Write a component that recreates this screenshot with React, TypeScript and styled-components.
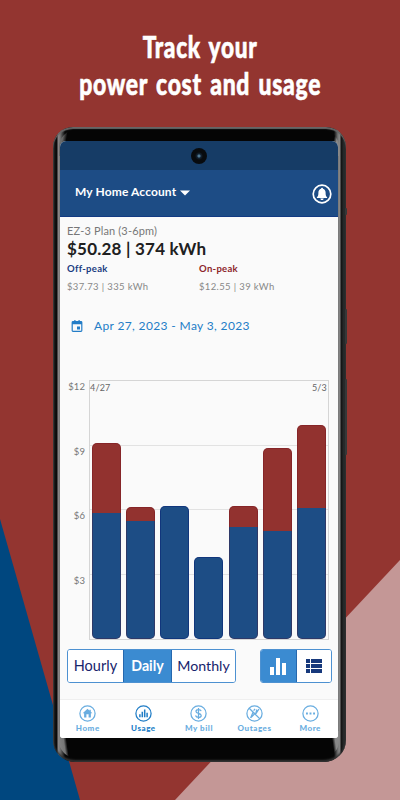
import React from 'react';
import styled, { createGlobalStyle } from 'styled-components';

const GlobalStyle = createGlobalStyle`
  * { box-sizing: border-box; }
  body { margin: 0; overflow: hidden; font-family: Lato, "Open Sans", sans-serif; }
`;

const Poster = styled.main`
  width: 400px;
  height: 800px;
  padding-top: 28px;
  display: flex;
  flex-direction: column;
  align-items: center;
  overflow: hidden;
  background: #933530;
  position: relative;
`;

const Backdrop = styled.svg`
  position: absolute;
  inset: 0;
`;

const Title = styled.h1`
  position: relative;
  margin: 0;
  height: 99px;
  display: flex;
  flex-direction: column;
  align-items: center;
  color: #fff;
  font-size: 30px;
  line-height: 37px;
  font-weight: 900;
  -webkit-text-stroke: 0.6px #fff;
`;

const TitleLine = styled.span<{ $scale: number }>`
  white-space: nowrap;
  letter-spacing: 0.9px;
  word-spacing: 3px;
  transform: scaleX(${(p) => p.$scale});
`;

const Phone = styled.div`
  position: relative;
  left: -0.5px;
  width: 293px;
  height: 635px;
  flex: none;
  padding: 14px 8px 24px 7px;
  border-radius: 20px 20px 22px 22px;
  background: linear-gradient(90deg, #3a3a3a 0, #111 2px, #080808 4px, #8c8889 5px, #777 7px, #060606 12px, #060606 281px, #777 285px, #888 287px, #111 288px, #292d2e 291px, #222 293px);
  box-shadow: inset 0 2px 1px #666, inset 0 -2px 2px #333;
`;

const Bezel = styled.div<{ $bottom?: boolean }>`
  position: absolute;
  left: 6px;
  right: 7px;
  ${(p) => (p.$bottom ? 'bottom: 4px; height: 27px; border-radius: 0 0 17px 17px;' : 'top: 3px; height: 26px; border-radius: 17px 17px 0 0;')}
  background: ${(p) => (p.$bottom
    ? 'linear-gradient(82deg, #888 0, #777 7px, #050505 10px, #050505 calc(100% - 8px), #888 calc(100% - 5px))'
    : 'linear-gradient(100deg, #777 0, #666 5px, #050505 9px, #050505 calc(100% - 8px), #888 calc(100% - 5px))')};
`;

const SideKey = styled.i<{ $top: number; $height: number }>`
  position: absolute;
  right: -1px;
  top: ${(p) => p.$top}px;
  width: 2px;
  height: ${(p) => p.$height}px;
  background: #343838;
  border-radius: 1px;
`;

const Screen = styled.div`
  position: relative;
  height: 597px;
  display: flex;
  flex-direction: column;
  background: #fafafa;
  border-radius: 6px 6px 3px 3px;
  overflow: hidden;
`;

const StatusBar = styled.div`
  height: 29px;
  flex: none;
  display: flex;
  justify-content: center;
  align-items: center;
  background: #163c66;
`;

const Camera = styled.div`
  width: 16px;
  height: 16px;
  border-radius: 50%;
  background: radial-gradient(circle at 50% 50%, #527a94 0 1px, #142536 2px, #080b0e 4px);
`;

const Header = styled.header`
  height: 47px;
  flex: none;
  display: flex;
  align-items: center;
  justify-content: space-between;
  padding: 1px 6px 0 15px;
  color: #fff;
  background: #1d4c85;
  border-bottom: 1px solid #123a83;
`;

const Account = styled.div`
  display: flex;
  align-items: center;
  gap: 4px;
  height: 18px;
  margin-top: -2px;
`;

const Text = styled.span<{ $size: number; $color?: string; $weight?: number; $space?: number }>`
  display: block;
  white-space: nowrap;
  font-size: ${(p) => p.$size}px;
  line-height: 1.2;
  color: ${(p) => p.$color ?? 'inherit'};
  font-weight: ${(p) => p.$weight ?? 400};
  letter-spacing: ${(p) => p.$space ?? 0}px;
`;

const Summary = styled.section`
  height: 95px;
  flex: none;
  padding: 7px 7px 0;
`;

const Amount = styled.div`
  height: 23px;
  margin-top: 2px;
`;

const Peaks = styled.div`
  display: grid;
  grid-template-columns: 132px 1fr;
  row-gap: 6px;
  margin-top: 1px;
`;

const DateRow = styled.div`
  height: 28px;
  flex: none;
  display: flex;
  align-items: center;
  gap: 11px;
  padding-left: 11px;
  color: #237dc7;
`;

const Chart = styled.section`
  height: 260px;
  flex: none;
  display: flex;
  margin-top: 40px;
`;

const Scale = styled.div`
  width: 29px;
  padding: 1px 4px 0 0;
  display: grid;
  grid-template-rows: repeat(4, 64.7px);
  justify-items: end;
`;

const Plot = styled.div`
  position: relative;
  width: 240px;
  height: 260px;
  display: flex;
  align-items: flex-end;
  justify-content: space-between;
  padding: 0 2px;
  border: 1px solid #d5d5d5;
  background: repeating-linear-gradient(to bottom, transparent 0 63.7px, #e2e2e2 63.7px 64.7px);
`;

const Bar = styled.div<{ $height: number; $peak: number }>`
  width: 29px;
  height: ${(p) => p.$height}px;
  border-radius: 5px;
  background: linear-gradient(to bottom, #92322f ${(p) => p.$peak}px, #1d4d85 ${(p) => p.$peak}px);
  box-shadow: inset 0 0 0 1px ${(p) => (p.$peak ? 'rgba(100,0,20,.25)' : 'rgba(0,20,110,.4)')};
`;

const DayMark = styled.div<{ $end?: boolean }>`
  position: absolute;
  top: 2px;
  ${(p) => (p.$end ? 'right: 1px;' : 'left: 0;')}
`;

const Controls = styled.div`
  height: 34px;
  flex: none;
  display: flex;
  justify-content: space-between;
  margin: 9px 6px 16px 7px;
`;

const Segments = styled.div`
  display: flex;
  border: 1px solid #4d91d1;
  border-radius: 3px;
  overflow: hidden;
  background: #fff;
`;

const Segment = styled.button<{ $width: number; $active?: boolean }>`
  width: ${(p) => p.$width}px;
  border: 0;
  padding: 0;
  display: flex;
  align-items: center;
  justify-content: center;
  font-family: inherit;
  color: ${(p) => (p.$active ? '#fff' : '#17246c')};
  background: ${(p) => (p.$active ? '#3b8bd1' : '#fff')};
  & + & { border-left: 1px solid #2668ae; }
`;

const Nav = styled.nav`
  height: 39px;
  flex: none;
  display: grid;
  grid-template-columns: repeat(5, 1fr);
  background: #fff;
  border-top: 1px solid #efefef;
`;

const NavItem = styled.a<{ $active?: boolean }>`
  display: flex;
  flex-direction: column;
  align-items: center;
  padding-top: 5px;
  gap: 2px;
  color: ${(p) => (p.$active ? '#207dc6' : '#69ade0')};
`;

type Glyph = 'home' | 'usage' | 'bill' | 'outage' | 'more';

function NavIcon({ kind }: { kind: Glyph }) {
  return (
    <svg width="17" height="17" viewBox="0 0 17 17" fill="none" stroke="currentColor" strokeWidth="1.25">
      <circle cx="8.5" cy="8.5" r="7.6" />
      {kind === 'home' && <path d="M8.5 3.7 3.7 8.3h1.4v4.2h2.3V9.2h2.2v3.3h2.3V8.3h1.4l-1.5-1.5V4.7h-1.3v1z" fill="currentColor" stroke="none" />}
      {kind === 'usage' && <path d="M4.9 12.3V9.2M7.3 12.3V6.8M9.7 12.3V4.5M12.1 12.3V7.8" strokeWidth="1.5" />}
      {kind === 'bill' && <path d="M11.2 6.1C10.8 5 9.9 4.6 8.5 4.6c-1.5 0-2.5.7-2.5 1.8 0 2.6 5.2 1.2 5.2 4 0 1.3-1.1 2-2.7 2-1.7 0-2.6-.7-3-1.9M8.5 3v11" />}
      {kind === 'outage' && <path d="m3.2 3.2 10.7 10.7M4.6 13 7.1 7l2.4 2.2L13 4M7.6 5.6l1.5-1.8M9.7 8.8l1.1-4.3M5.2 12.2l3-3" />}
      {kind === 'more' && <path d="M4 8.5h1.9M7.55 8.5h1.9M11.1 8.5H13" strokeWidth="1.9" />}
    </svg>
  );
}

const bars = [
  { height: 196, peak: 69.5 },
  { height: 132, peak: 14 },
  { height: 133, peak: 0 },
  { height: 82, peak: 0 },
  { height: 133, peak: 21 },
  { height: 191, peak: 83.5 },
  { height: 214, peak: 82.5 },
];

const tabs: { label: string; kind: Glyph; active?: boolean }[] = [
  { label: 'Home', kind: 'home' },
  { label: 'Usage', kind: 'usage', active: true },
  { label: 'My bill', kind: 'bill' },
  { label: 'Outages', kind: 'outage' },
  { label: 'More', kind: 'more' },
];

export default function App() {
  return (
    <Poster>
      <GlobalStyle />
      <Backdrop width="400" height="800" viewBox="0 0 400 800">
        <path d="M0 519 80 800H0z" fill="#00477f" />
        <path d="M400 560V800H175z" fill="#c49796" />
      </Backdrop>
      <Title>
        <TitleLine $scale={0.755}>Track your</TitleLine>
        <TitleLine $scale={0.765}>power cost and usage</TitleLine>
      </Title>
      <Phone>
        <Bezel />
        <Bezel $bottom />
        <SideKey $top={81} $height={7} />
        <SideKey $top={182} $height={35} />
        <SideKey $top={252} $height={76} />
        <Screen>
          <StatusBar><Camera /></StatusBar>
          <Header>
            <Account>
              <Text $size={12} $weight={700} $space={0.12}>My Home Account</Text>
              <svg width="10" height="6" viewBox="0 0 10 6"><path d="M0 .5h10L5 5.5z" fill="#fff" /></svg>
            </Account>
            <svg width="20" height="20" viewBox="0 0 20 20">
              <circle cx="10" cy="10" r="8.8" fill="none" stroke="#fff" strokeWidth="1.7" />
              <path d="M10 3.8c.6 0 1 .4 1 .9 1.7.5 2.6 1.9 2.6 3.9 0 2.7.3 3.6 1.5 4.7v.7H4.9v-.7c1.2-1.1 1.5-2 1.5-4.7 0-2 .9-3.4 2.6-3.9 0-.5.4-.9 1-.9zM8.4 14.5h3.2c-.1 1-.7 1.5-1.6 1.5s-1.5-.5-1.6-1.5z" fill="#fff" />
            </svg>
          </Header>
          <Summary>
            <Text $size={11} $color="#777" $space={0.15}>EZ-3 Plan (3-6pm)</Text>
            <Amount><Text $size={17} $color="#202020" $weight={700} $space={0.22}>$50.28 | 374 kWh</Text></Amount>
            <Peaks>
              <Text $size={9.5} $color="#193b80" $weight={700} $space={0.3}>Off-peak</Text>
              <Text $size={9.5} $color="#8d2529" $weight={700} $space={0.3}>On-peak</Text>
              <Text $size={9.5} $color="#888" $space={0.36}>$37.73 | 335 kWh</Text>
              <Text $size={9.5} $color="#888" $space={0.36}>$12.55 | 39 kWh</Text>
            </Peaks>
          </Summary>
          <DateRow>
            <svg width="12" height="13" viewBox="0 0 12 13" fill="currentColor">
              <path fillRule="evenodd" d="M2 1h1.3V0h1.2v1h3V0h1.2v1H10a1.4 1.4 0 0 1 1.4 1.4v8.2A1.4 1.4 0 0 1 10 12H2a1.4 1.4 0 0 1-1.4-1.4V2.4A1.4 1.4 0 0 1 2 1zm-.2 3.2v6.6h8.4V4.2zM6 6.4h3v3H6z" />
            </svg>
            <Text $size={12} $space={0.36}>Apr 27, 2023 - May 3, 2023</Text>
          </DateRow>
          <Chart>
            <Scale>
              {['$12', '$9', '$6', '$3'].map((value) => <Text key={value} $size={9.5} $color="#777" $space={0.1}>{value}</Text>)}
            </Scale>
            <Plot>
              {bars.map((bar, i) => <Bar key={i} $height={bar.height} $peak={bar.peak} />)}
              <DayMark><Text $size={9} $color="#666" $space={0.2}>4/27</Text></DayMark>
              <DayMark $end><Text $size={9} $color="#666" $space={0.2}>5/3</Text></DayMark>
            </Plot>
          </Chart>
          <Controls>
            <Segments>
              <Segment $width={55}><Text $size={14.5} $space={0.05}>Hourly</Text></Segment>
              <Segment $width={48} $active><Text $size={14.2} $weight={700}>Daily</Text></Segment>
              <Segment $width={64}><Text $size={14.2}>Monthly</Text></Segment>
            </Segments>
            <Segments>
              <Segment $width={35} $active aria-label="Chart view">
                <svg width="17" height="17" viewBox="0 0 17 17" fill="#fff"><path d="M0 9h4v8H0zM6 0h4v17H6zM12 5h4v12h-4z" /></svg>
              </Segment>
              <Segment $width={35} aria-label="List view">
                <svg width="16" height="14" viewBox="0 0 16 14" fill="#17397c"><path d="M0 0h4v4H0zM5 0h11v4H5zM0 5h4v4H0zM5 5h11v4H5zM0 10h4v4H0zM5 10h11v4H5z" /></svg>
              </Segment>
            </Segments>
          </Controls>
          <Nav>
            {tabs.map((tab) => (
              <NavItem key={tab.label} $active={tab.active}>
                <NavIcon kind={tab.kind} />
                <Text $size={8} $weight={900} $space={0.55}>{tab.label}</Text>
              </NavItem>
            ))}
          </Nav>
        </Screen>
      </Phone>
    </Poster>
  );
}
